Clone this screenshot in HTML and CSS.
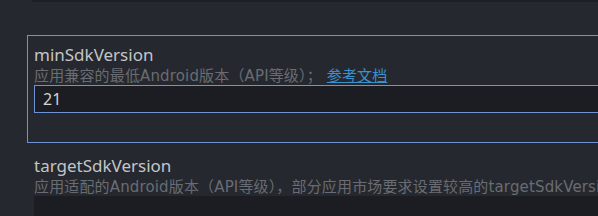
FILE: index.html
```html
<!DOCTYPE html>
<html lang="zh-CN">
<head>
    <meta charset="UTF-8">
    <title>SDK Settings</title>
    <link rel="stylesheet" href="styles.css">
</head>
<body>
    <div class="top-edge"></div>

    <div class="settings">
        <div class="field field-active">
            <div class="field-title">minSdkVersion</div>
            <div class="field-desc">应用兼容的最低Android版本（API等级）； <a href="#" class="doc-link">参考文档</a></div>
            <div class="field-input field-input-bordered">21</div>
        </div>

        <div class="field">
            <div class="field-title">targetSdkVersion</div>
            <div class="field-desc">应用适配的Android版本（API等级），部分应用市场要求设置较高的targetSdkVersion</div>
            <div class="field-input"></div>
        </div>
    </div>
</body>
</html>
```

FILE: styles.css
```css
html, body {
    margin: 0;
    padding: 0;
    overflow: hidden;
}
body {
    background-color: #26282f;
    font-family: "Noto Sans", "Noto Sans CJK SC", sans-serif;
    width: 598px;
    height: 216px;
}
.top-edge {
    height: 2px;
    margin-left: 32px;
    background-color: #1e1f25;
}
.settings {
    display: flex;
    flex-direction: column;
    gap: 3px;
    margin-top: 33px;
    margin-left: 27px;
    width: 700px;
}
.field {
    border: 1px solid transparent;
    padding: 9px 0 29px 6px;
}
.field-active {
    border-color: #6d92d6;
}
.field-title {
    font-size: 17px;
    line-height: 20px;
    color: #c3c5c8;
}
.field-desc {
    margin-top: 2px;
    font-family: "DejaVu Sans", "Noto Sans CJK SC", sans-serif;
    font-size: 15px;
    line-height: 18px;
    letter-spacing: 0.15px;
    color: #696c72;
    white-space: nowrap;
}
.doc-link {
    color: #3990cf;
    text-decoration: underline;
}
.field-input {
    height: 28px;
    box-sizing: border-box;
    background-color: #1c1d22;
    color: #d2d3d5;
    font-size: 16px;
    line-height: 26px;
    padding-left: 8px;
}
.field-input-bordered {
    border: 1px solid #6d92d6;
}
```
